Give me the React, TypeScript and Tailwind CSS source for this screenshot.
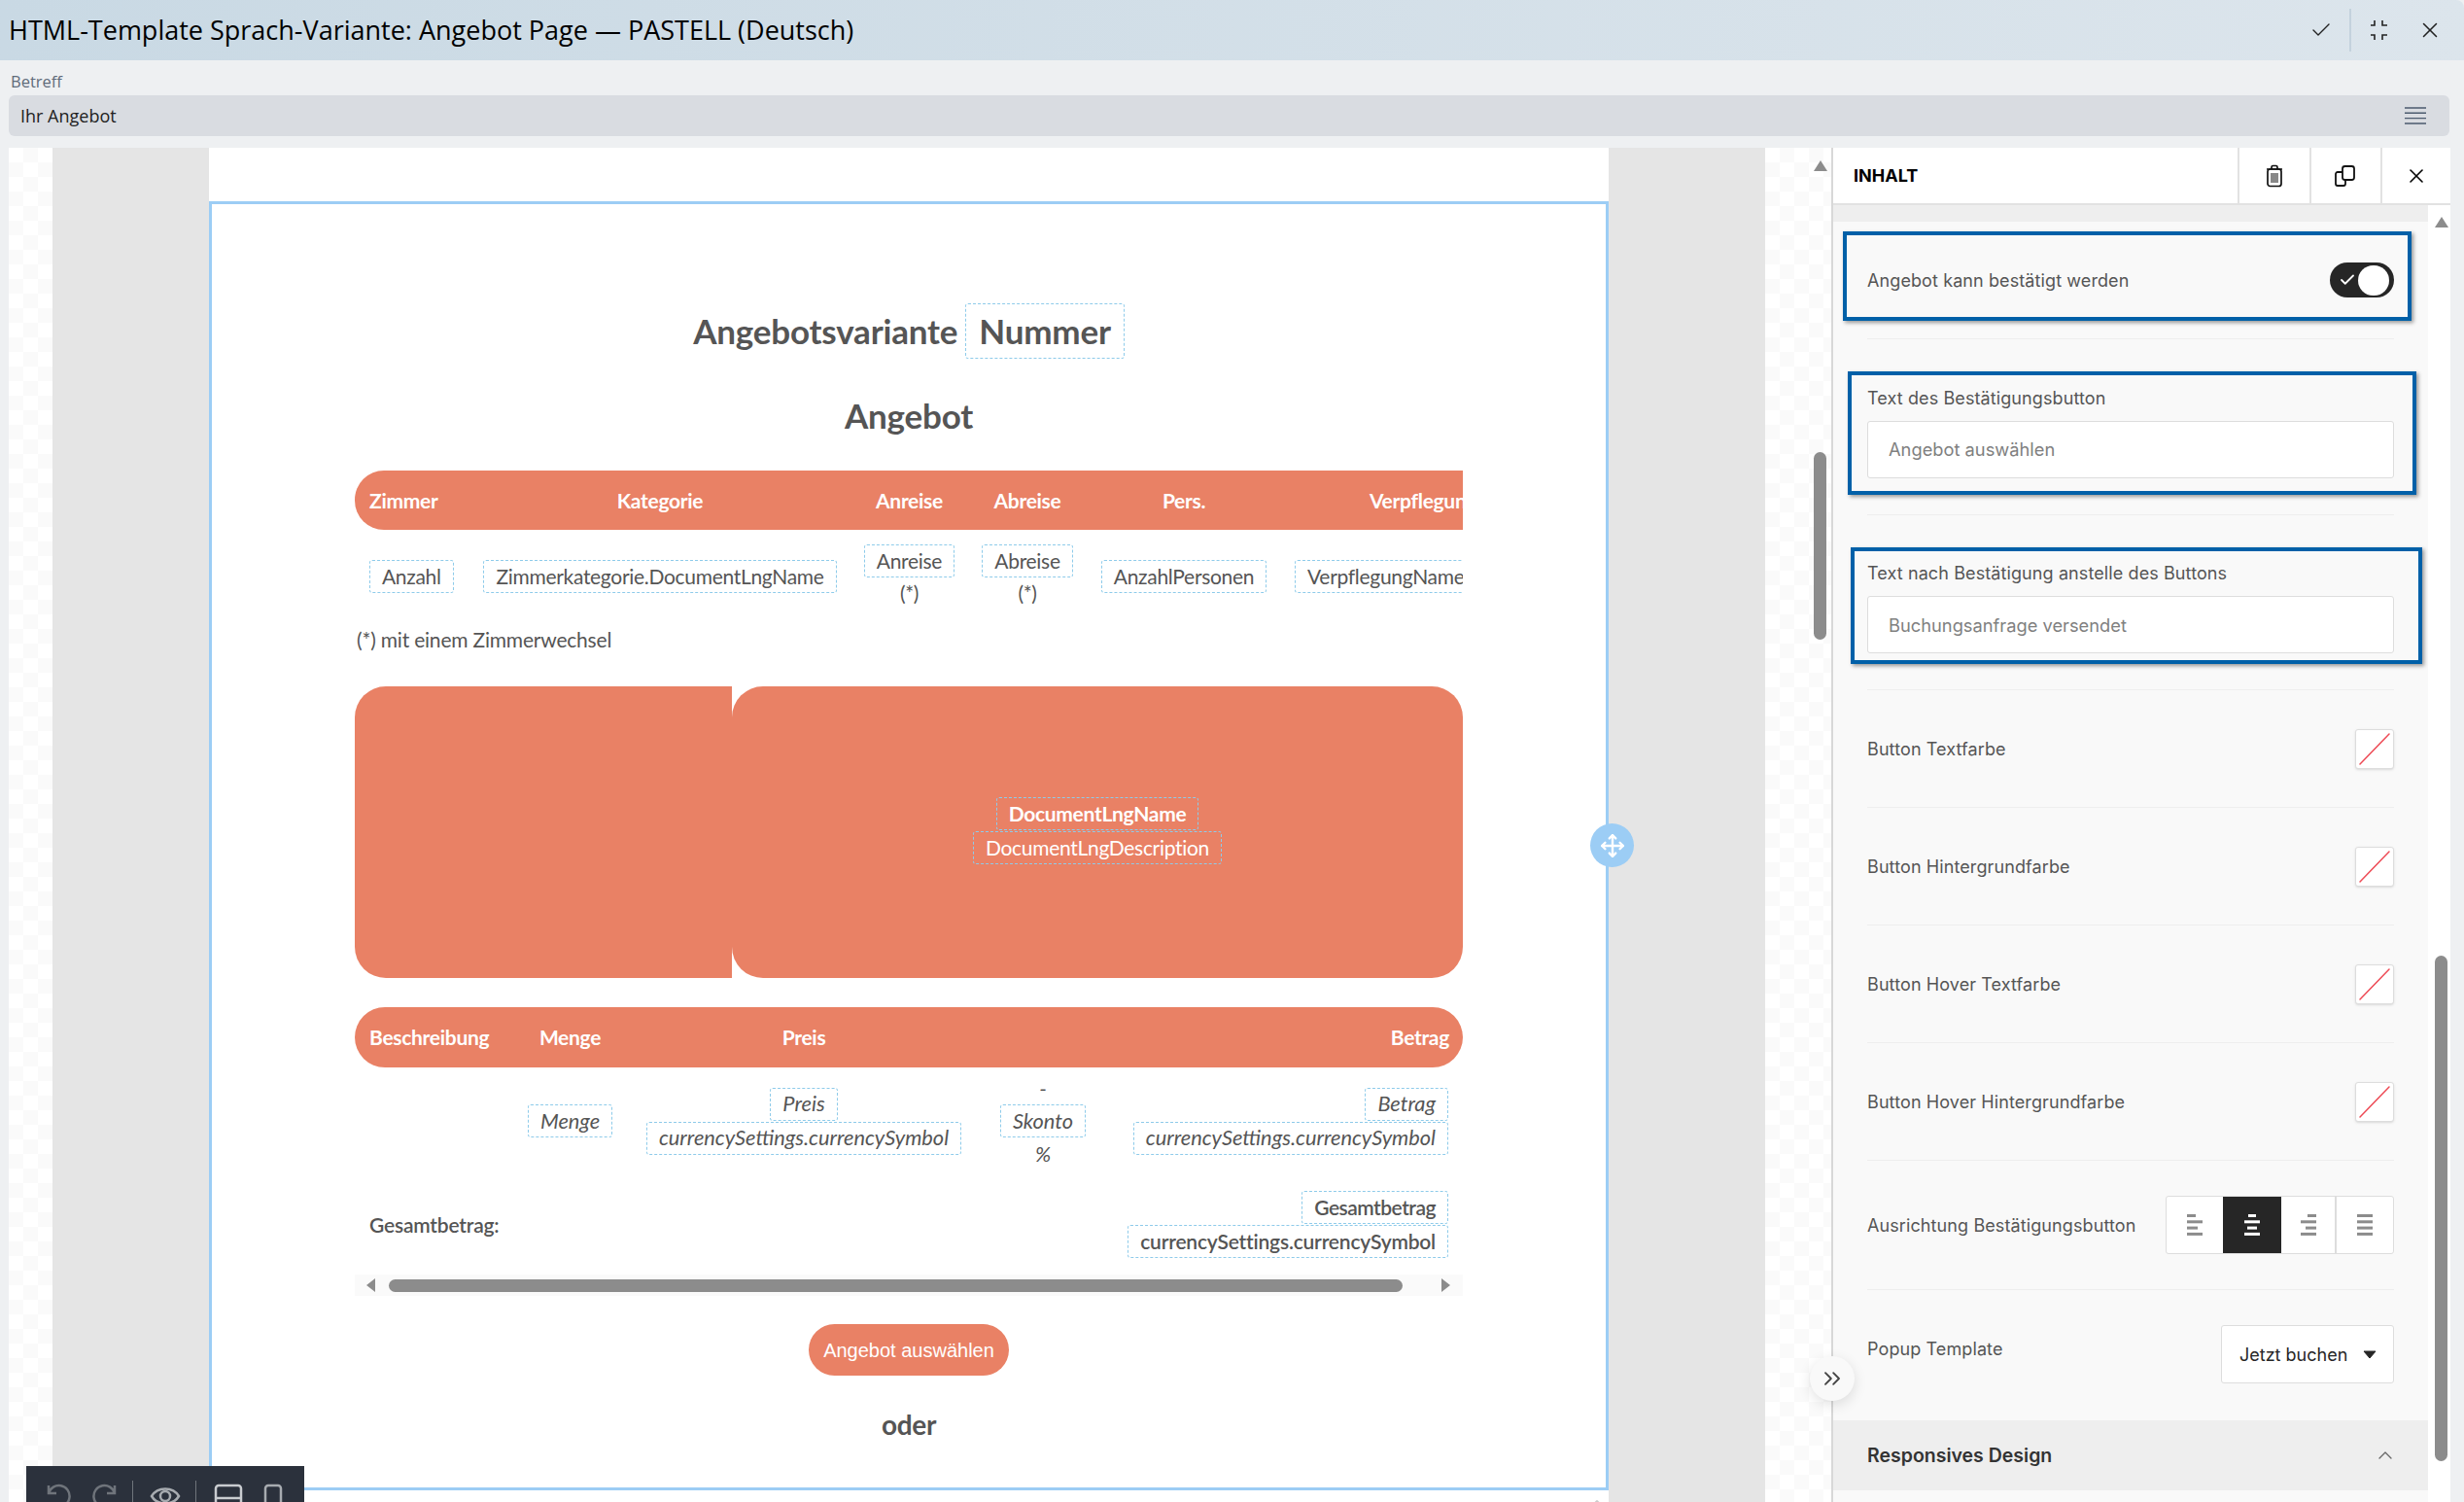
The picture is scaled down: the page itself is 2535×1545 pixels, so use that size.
import { useState } from "react";
import { Check, ChevronUp, ChevronsRight, Move, X } from "lucide-react";

const sansPanel = "font-['Inter',sans-serif]";

function Tag({ children, className = "" }: { children: React.ReactNode; className?: string }) {
  return (
    <span className={`inline-flex h-[34px] items-center whitespace-nowrap rounded-[3px] border border-dashed border-[#8ecbea] px-[12px] ${className}`}>
      {children}
    </span>
  );
}

function Divider() {
  return <div className="h-px bg-[#eeeeee]" />;
}

function Swatch() {
  return (
    <div className="flex h-[41px] w-[40px] items-center justify-center rounded-[3px] border border-[#dddddd] bg-white shadow-sm">
      <svg width="36" height="37" viewBox="0 0 36 37">
        <line x1="3" y1="34" x2="33" y2="3" stroke="#ee4a55" strokeWidth="1.5" strokeLinecap="round" />
      </svg>
    </div>
  );
}

function ColorRow({ label }: { label: string }) {
  return (
    <div className="flex h-[120px] items-center justify-between">
      <span className="text-[18px] tracking-[0.1px] text-[#555555]">{label}</span>
      <Swatch />
    </div>
  );
}

function AlignIcon({ lines, color }: { lines: [number, number][]; color: string }) {
  return (
    <svg width="16" height="22" viewBox="0 0 16 22">
      {lines.map(([x, w], i) => (
        <rect key={i} x={x} y={i * 6.3} width={w} height="3" fill={color} />
      ))}
    </svg>
  );
}

function DocumentTitle() {
  return (
    <>
      <div className="mt-[102px] flex items-center justify-center gap-[8px]">
        <span className="text-[35px] leading-none font-bold tracking-[-0.2px] text-[#555555]">Angebotsvariante</span>
        <span className="inline-flex h-[57px] items-center rounded-[3px] border border-dashed border-[#8ecbea] px-[13px] text-[35px] font-bold tracking-[-0.2px] text-[#555555]">
          Nummer
        </span>
      </div>
      <div className="mt-[38px] text-center text-[35px] leading-[41px] font-bold tracking-[-0.2px] text-[#555555]">Angebot</div>
    </>
  );
}

function RoomTable() {
  const grid = "grid grid-cols-[118px_392px_121px_122px_200px_220px]";
  return (
    <div className="mt-[36px] w-[1140px] overflow-hidden">
      <div className={`${grid} h-[61px] items-center rounded-l-[30px] bg-[#e98165] text-[21px] font-bold tracking-[-0.3px] text-white`}>
        <span className="pl-[15px]">Zimmer</span>
        <span className="text-center">Kategorie</span>
        <span className="text-center">Anreise</span>
        <span className="text-center">Abreise</span>
        <span className="text-center">Pers.</span>
        <span className="pl-[91px] whitespace-nowrap">Verpflegung</span>
      </div>
      <div className={`${grid} h-[77px] items-center pt-[15px] text-[21px] tracking-[-0.3px] text-[#555555]`}>
        <div className="pl-[15px]"><Tag>Anzahl</Tag></div>
        <div className="text-center"><Tag>Zimmerkategorie.DocumentLngName</Tag></div>
        <div className="flex flex-col items-center"><Tag>Anreise</Tag><span className="h-[32px] leading-[32px]">(*)</span></div>
        <div className="flex flex-col items-center"><Tag>Abreise</Tag><span className="h-[32px] leading-[32px]">(*)</span></div>
        <div className="text-center"><Tag>AnzahlPersonen</Tag></div>
        <div className="pl-[14px]"><Tag>VerpflegungName</Tag></div>
      </div>
    </div>
  );
}

function DetailCard() {
  return (
    <div className="mt-[36px] flex h-[300px] w-[1140px]">
      <div className="w-[388px] rounded-l-[32px] bg-[#e98165]" />
      <div className="flex w-[752px] flex-col items-center justify-center rounded-[32px] bg-[#e98165] pb-[3px] text-[21px] tracking-[-0.3px] text-white">
        <Tag className="font-bold">DocumentLngName</Tag>
        <Tag className="mt-px">DocumentLngDescription</Tag>
      </div>
    </div>
  );
}

function PriceTable() {
  const grid = "grid grid-cols-[163px_117px_364px_128px_368px]";
  return (
    <div className="mt-[30px] w-[1140px]">
      <div className={`${grid} h-[62px] items-center rounded-full bg-[#e98165] text-[21px] font-bold tracking-[-0.3px] text-white`}>
        <span className="pl-[15px]">Beschreibung</span>
        <span className="text-center">Menge</span>
        <span className="text-center">Preis</span>
        <span />
        <span className="pr-[14px] text-right">Betrag</span>
      </div>
      <div className={`${grid} mt-[12px] items-center text-[21.8px] text-[#555555] italic`}>
        <span />
        <div className="text-center"><Tag>Menge</Tag></div>
        <div className="flex flex-col items-center"><Tag>Preis</Tag><Tag className="mt-px">currencySettings.currencySymbol</Tag></div>
        <div className="flex flex-col items-center">
          <span className="h-[26px] leading-[20px]">-</span>
          <Tag>Skonto</Tag>
          <span className="h-[26px] leading-[34px]">%</span>
        </div>
        <div className="flex flex-col items-end pr-[15px]"><Tag>Betrag</Tag><Tag className="mt-px">currencySettings.currencySymbol</Tag></div>
      </div>
      <div className="mt-[29px] flex items-center justify-between pr-[15px] pl-[15px] text-[21px] font-semibold tracking-[-0.2px] text-[#555555]">
        <span>Gesamtbetrag:</span>
        <div className="flex flex-col items-end">
          <Tag className="tracking-[-0.5px]">Gesamtbetrag</Tag>
          <Tag className="mt-px">currencySettings.currencySymbol</Tag>
        </div>
      </div>
      <div className="mt-[17px] flex h-[22px] items-center bg-[#fafafa]">
        <svg className="ml-[11px]" width="11" height="14" viewBox="0 0 11 14"><path d="M10 0 L10 14 L1 7Z" fill="#8c8c8c" /></svg>
        <div className="ml-[13px] h-[13px] w-[1043px] rounded-full bg-[#8c8c8c]" />
        <svg className="ml-[39px]" width="11" height="14" viewBox="0 0 11 14"><path d="M1 0 L1 14 L10 7Z" fill="#8c8c8c" /></svg>
      </div>
    </div>
  );
}

function Canvas() {
  return (
    <div className="relative h-full w-[1440px] bg-white">
      <div className="mt-[55px] h-[1326px] border-3 border-[#9ccdf5] bg-white font-['Lato',sans-serif]">
        <div className="flex flex-col items-center">
          <DocumentTitle />
          <RoomTable />
          <div className="mt-[24px] w-[1140px] pl-[2px] text-[21px] leading-[24px] tracking-[-0.2px] text-[#555555]">(*) mit einem Zimmerwechsel</div>
          <DetailCard />
          <PriceTable />
          <button className="mt-[29px] flex h-[53px] w-[206px] items-center justify-center rounded-full bg-[#e98165] font-['Liberation_Sans',sans-serif] text-[20px] text-white">
            Angebot auswählen
          </button>
          <div className="mt-[33px] text-[28px] leading-[34px] font-bold tracking-[-0.3px] text-[#555555]">oder</div>
        </div>
      </div>
      <ChevronUp size={26} strokeWidth={1.5} className="absolute top-[1382px] left-[1415px] text-[#cccccc]" />
      <div className="absolute top-[695px] left-[1421px] flex h-[45px] w-[45px] items-center justify-center rounded-full bg-[#9ccdf5] text-white">
        <Move size={26} strokeWidth={2.2} />
      </div>
    </div>
  );
}

function InspectorPanel() {
  const [canConfirm] = useState(true);
  return (
    <div className={`relative flex h-full w-[637px] flex-col border-l-2 border-[#d8d8d8] bg-[#f9f9f9] ${sansPanel}`}>
      <div className="flex h-[59px] shrink-0 items-stretch border-b-2 border-[#e2e2e2] bg-white">
        <span className="flex flex-1 items-center pl-[21px] text-[18px] font-bold text-black">INHALT</span>
        <span className="flex w-[74px] items-center justify-center border-l-2 border-[#e2e2e2]">
          <svg width="20" height="24" viewBox="0 0 20 24" fill="none" stroke="#111111" strokeWidth="1.7">
            <path d="M2 5 H18 M7 5 V3 a1.5 1.5 0 0 1 1.5-1.5 h3 A1.5 1.5 0 0 1 13 3 V5" />
            <rect x="3" y="5" width="14" height="17.5" rx="2.5" />
            <path strokeWidth="1" d="M7 9 V19 M9 9 V19 M11 9 V19 M13 9 V19" />
          </svg>
        </span>
        <span className="flex w-[73px] items-center justify-center border-l-2 border-[#e2e2e2] pr-[3px]">
          <svg width="24" height="24" viewBox="0 0 24 24" fill="none" stroke="#111111" strokeWidth="1.8">
            <rect x="10" y="2" width="12" height="14" rx="2.5" />
            <path d="M10 8 H5 a2 2 0 0 0-2 2 V20 a2 2 0 0 0 2 2 H11 a2 2 0 0 0 2-2 V16" />
          </svg>
        </span>
        <span className="flex w-[72px] items-center justify-center border-l-2 border-[#e2e2e2]"><X size={24} strokeWidth={1.6} /></span>
      </div>
      <div className="flex min-h-0 flex-1">
        <div className="flex w-[612px] flex-col">
          <div className="h-[17px] shrink-0 bg-[#eeeeee]" />
          <div className="flex flex-col pr-[35px] pl-[35px]">
            <div className="flex h-[120px] items-center justify-between">
              <span className="text-[18px] tracking-[0.1px] text-[#555555]">Angebot kann bestätigt werden</span>
              <div className="flex h-[36px] w-[66px] items-center rounded-full bg-[#262626] pl-[9px]">
                {canConfirm && <Check size={18} strokeWidth={2.4} className="text-white" />}
                <span className="ml-[2px] h-[31px] w-[32px] rounded-full bg-white" />
              </div>
            </div>
            <Divider />
            <div className="flex h-[180px] flex-col justify-center pt-[12px]">
              <span className="mb-[12px] text-[18px] leading-[22px] tracking-[0.1px] text-[#555555]">Text des Bestätigungsbutton</span>
              <input readOnly value="Angebot auswählen" className="h-[59px] rounded-[3px] border border-[#dddddd] bg-white px-[21px] text-[18.3px] text-[#808080]" />
            </div>
            <Divider />
            <div className="flex h-[179px] flex-col justify-center pt-[12px]">
              <span className="mb-[12px] text-[18px] leading-[22px] tracking-[0.1px] text-[#555555]">Text nach Bestätigung anstelle des Buttons</span>
              <input readOnly value="Buchungsanfrage versendet" className="h-[59px] rounded-[3px] border border-[#dddddd] bg-white px-[21px] text-[18.3px] text-[#808080]" />
            </div>
            <Divider />
            <ColorRow label="Button Textfarbe" />
            <Divider />
            <ColorRow label="Button Hintergrundfarbe" />
            <Divider />
            <ColorRow label="Button Hover Textfarbe" />
            <Divider />
            <ColorRow label="Button Hover Hintergrundfarbe" />
            <Divider />
            <div className="flex h-[132px] items-center justify-between">
              <span className="text-[18px] tracking-[0.1px] text-[#555555]">Ausrichtung Bestätigungsbutton</span>
              <div className="flex h-[60px] w-[235px] rounded-[3px] border border-[#dddddd] bg-white">
                <span className="flex w-[58px] items-center justify-center"><AlignIcon color="#8c8c8c" lines={[[0, 9], [0, 16], [0, 11], [0, 16]]} /></span>
                <span className="flex w-[60px] items-center justify-center bg-[#262626]"><AlignIcon color="#ffffff" lines={[[4, 8], [0, 16], [3, 10], [0, 16]]} /></span>
                <span className="flex w-[57px] items-center justify-center border-r-2 border-[#dddddd]"><AlignIcon color="#8c8c8c" lines={[[7, 9], [0, 16], [5, 11], [0, 16]]} /></span>
                <span className="flex flex-1 items-center justify-center"><AlignIcon color="#8c8c8c" lines={[[0, 16], [0, 16], [0, 16], [0, 16]]} /></span>
              </div>
            </div>
            <Divider />
            <div className="flex h-[134px] justify-between pt-[36px]">
              <span className="pt-[13px] text-[18px] leading-[24px] tracking-[0.1px] text-[#555555]">Popup Template</span>
              <div className="flex h-[60px] w-[178px] items-center justify-between rounded-[3px] border border-[#dddddd] bg-white pr-[17px] pl-[18px] text-[18px] text-[#262626]">
                Jetzt buchen
                <svg width="14" height="9" viewBox="0 0 14 9"><path d="M1 1 H13 L7 8Z" fill="#262626" stroke="#262626" strokeLinejoin="round" /></svg>
              </div>
            </div>
          </div>
          <div className="flex h-[72px] shrink-0 items-center justify-between bg-[#eeeeee] pt-[2px] pr-[35px] pl-[35px]">
            <span className="text-[19.5px] font-semibold text-[#333333]">Responsives Design</span>
            <ChevronUp size={24} strokeWidth={1.3} className="-mr-[3px] mb-[2px] text-[#666666]" />
          </div>
        </div>
        <div className="relative flex-1 bg-white">
          <svg className="absolute top-[12px] left-[7px]" width="14" height="11" viewBox="0 0 14 11"><path d="M7 0 L14 11 H0Z" fill="#8c8c8c" /></svg>
          <div className="absolute top-[772px] left-[7px] h-[520px] w-[13px] rounded-full bg-[#8c8c8c]" />
        </div>
      </div>
      <div className="absolute top-[86px] left-[10px] h-[92px] w-[585px] border-4 border-[#0060a8] shadow-[2px_2px_4px_rgba(0,0,0,0.4)]" />
      <div className="absolute top-[230px] left-[15px] h-[127px] w-[585px] border-4 border-[#0060a8] shadow-[2px_2px_4px_rgba(0,0,0,0.4)]" />
      <div className="absolute top-[411px] left-[18px] h-[120px] w-[588px] border-4 border-[#0060a8] shadow-[2px_2px_4px_rgba(0,0,0,0.4)]" />
      <div className="absolute top-[1243px] -left-[24px] flex h-[46px] w-[46px] items-center justify-center rounded-full bg-[#f9f9f9] text-[#444444] shadow-[0_4px_14px_rgba(0,0,0,0.12)]">
        <ChevronsRight size={28} strokeWidth={1.6} />
      </div>
    </div>
  );
}

export default function App() {
  return (
    <div className="relative h-[1545px] w-[2535px] overflow-hidden bg-[#eef0f2] font-['Open_Sans',sans-serif]">
      <div className="flex h-[62px] items-center justify-between rounded-tr-[8px] bg-gradient-to-r from-[#c9d9e4] to-[#dce5ec] pr-[22px] pl-[9px]">
        <h1 className="text-[27px] text-black">HTML-Template Sprach-Variante: Angebot Page — PASTELL (Deutsch)</h1>
        <div className="flex items-center text-[#222222]">
          <Check size={24} strokeWidth={1.4} />
          <span className="mx-[17px] h-[44px] w-[2px] bg-[#c4d2dd]" />
          <svg className="mr-[29px]" width="22" height="22" viewBox="0 0 22 22" fill="none" stroke="#222222" strokeWidth="1.6">
            <path d="M7 1 V6 H3 M15 1 V6 H20 M7 21 V16 H3 M15 21 V16 H20" />
          </svg>
          <X size={26} strokeWidth={1.4} />
        </div>
      </div>
      <div className="h-[90px] px-[9px] pr-[15px]">
        <div className="h-[36px] pt-[11px] pl-[2px] text-[16.5px] leading-[22px] text-[#5f6b7a]">Betreff</div>
        <div className="flex h-[42px] items-center justify-between rounded-[6px] bg-[#d9dce1] pr-[24px] pl-[12px] text-[18px] text-[#222222]">
          Ihr Angebot
          <svg width="22" height="18" viewBox="0 0 22 18" stroke="#4b5a6e" strokeWidth="1.4">
            <path d="M0 1 H22 M0 6.3 H22 M0 11.6 H22 M0 17 H22" />
          </svg>
        </div>
      </div>
      <div className="flex h-[1393px] pl-[9px]">
        <div className="w-[45px] bg-[image:conic-gradient(#fafafa_25%,#ffffff_0_50%,#fafafa_0_75%,#ffffff_0)] bg-size-[30px_30px]" />
        <div className="w-[161px] bg-[#e5e5e5]" />
        <Canvas />
        <div className="w-[161px] bg-[#e5e5e5]" />
        <div className="relative w-[68px] bg-[image:conic-gradient(#fafafa_25%,#ffffff_0_50%,#fafafa_0_75%,#ffffff_0)] bg-size-[30px_30px]">
          <svg className="absolute top-[13px] left-[50px]" width="14" height="11" viewBox="0 0 14 11"><path d="M7 0 L14 11 H0Z" fill="#8c8c8c" /></svg>
          <div className="absolute top-[313px] left-[50px] h-[193px] w-[13px] rounded-full bg-[#8c8c8c]" />
        </div>
        <InspectorPanel />
      </div>
      <div className="absolute top-[1508px] left-[27px] flex h-[37px] w-[286px] items-start gap-0 bg-[#2b313c] pt-[18px]">
        <svg className="ml-[20px]" width="26" height="26" viewBox="0 0 26 26" fill="none" stroke="#6f747b" strokeWidth="2.5"><path d="M3 2 V10 H11 M3 10 A11 11 0 1 1 13 24" /></svg>
        <svg className="ml-[22px]" width="26" height="26" viewBox="0 0 26 26" fill="none" stroke="#6f747b" strokeWidth="2.5"><path d="M23 2 V10 H15 M23 10 A11 11 0 1 0 13 24" /></svg>
        <span className="mt-[-3px] ml-[15px] h-[22px] w-px bg-[#6f747b]" />
        <svg className="ml-[17px]" width="32" height="26" viewBox="0 0 32 26" fill="none" stroke="#a7abb0" strokeWidth="2.5"><path d="M2 13 C8 3 24 3 30 13 C24 23 8 23 2 13Z" /><circle cx="16" cy="13" r="5" /></svg>
        <span className="mt-[-3px] ml-[15px] h-[22px] w-px bg-[#6f747b]" />
        <svg className="ml-[18px]" width="30" height="26" viewBox="0 0 30 26" fill="none" stroke="#c9ccd0" strokeWidth="2.5"><rect x="2" y="2" width="26" height="30" rx="3" /><path d="M2 15 H28" /></svg>
        <svg className="ml-[21px]" width="20" height="26" viewBox="0 0 20 26" fill="none" stroke="#a7abb0" strokeWidth="2.5"><rect x="2" y="2" width="16" height="30" rx="3" /></svg>
      </div>
    </div>
  );
}
